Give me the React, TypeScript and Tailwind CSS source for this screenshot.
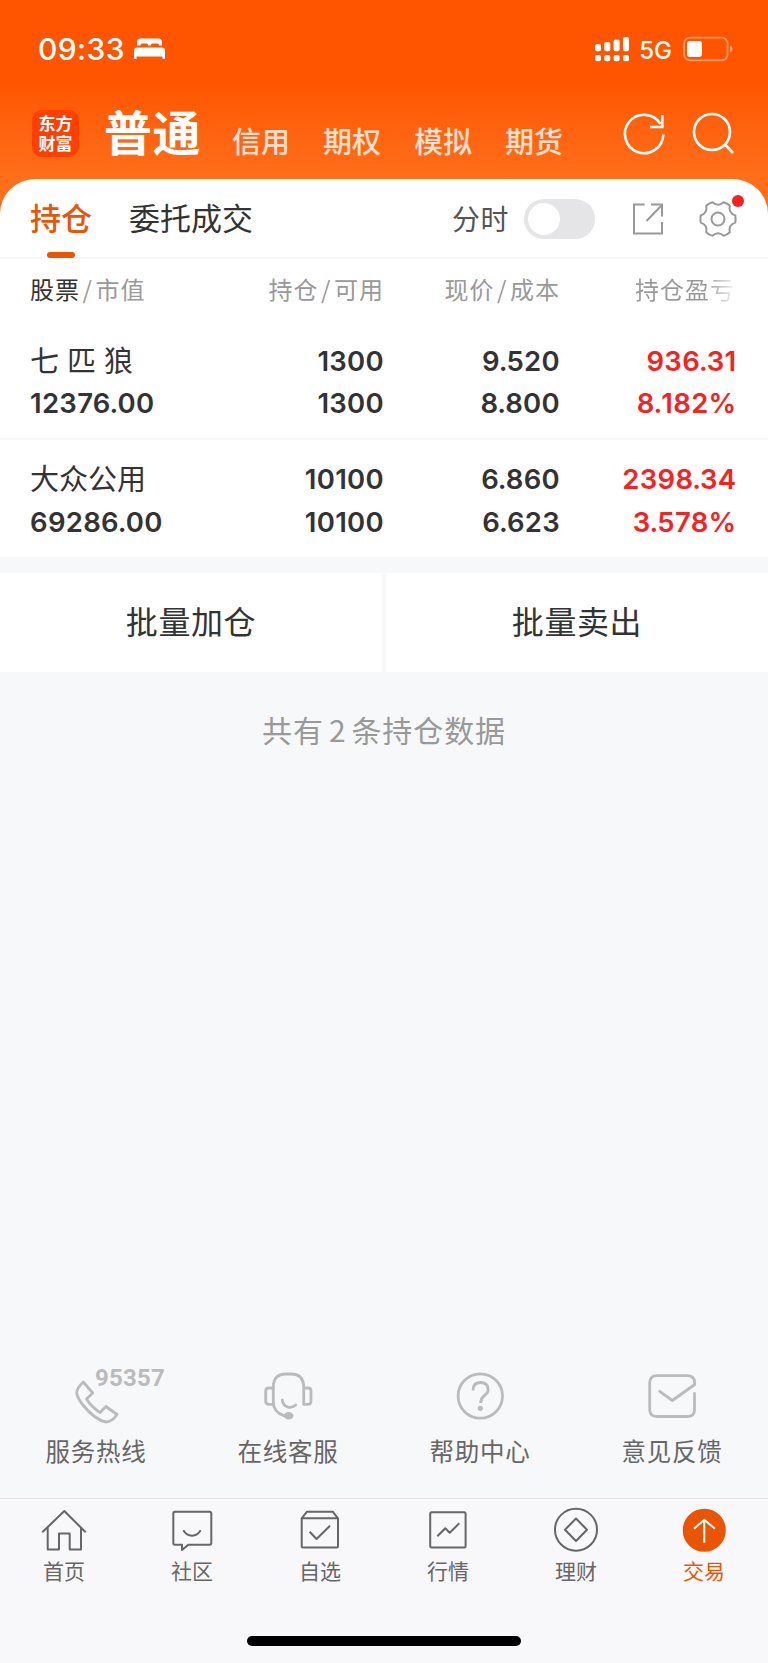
import React from "react";

interface Holding {
  name: string;
  marketValue: string;
  amount: string;
  available: string;
  price: string;
  cost: string;
  profit: string;
  profitRate: string;
}

const holdings: Holding[] = [
  {
    name: "七 匹 狼",
    marketValue: "12376.00",
    amount: "1300",
    available: "1300",
    price: "9.520",
    cost: "8.800",
    profit: "936.31",
    profitRate: "8.182%",
  },
  {
    name: "大众公用",
    marketValue: "69286.00",
    amount: "10100",
    available: "10100",
    price: "6.860",
    cost: "6.623",
    profit: "2398.34",
    profitRate: "3.578%",
  },
];

const accounts = ["信用", "期权", "模拟", "期货"];

function StatusBar() {
  return (
    <div className="flex h-[98px] items-center pr-[35px] pl-[38px] text-white">
      <span className="font-[Inter] text-[30px] leading-none font-medium tracking-[0.4px]">
        09:33
      </span>
      <svg className="ml-[9px]" width="32" height="22" viewBox="0 0 32 22" fill="currentColor">
        <path d="M3 7.5V4Q3 0.5 6.5 0.5H24.5Q28 0.5 28 4V7.5H25V7Q25 5.5 23.5 5.5H18.5Q17 5.5 17 7V7.5H14V7Q14 5.5 12.5 5.5H8Q6.5 5.5 6.5 7V7.5Z" />
        <path d="M0 21V12.5Q0 9.5 3 9.5H28Q31 9.5 31 12.5V21H28.5V18.5H2.5V21Z" />
      </svg>

      <div className="ml-auto flex items-center">
        <svg width="35" height="26" viewBox="0 0 35 26" fill="currentColor">
          <rect x="0" y="8" width="6" height="7.3" rx="2" />
          <rect x="9.3" y="6" width="6" height="9.3" rx="2" />
          <rect x="18.6" y="3.5" width="6" height="11.8" rx="2" />
          <rect x="28" y="1" width="6" height="14.3" rx="2" />
          <rect x="0" y="19" width="6" height="6.3" rx="2" />
          <rect x="9.3" y="19" width="6" height="6.3" rx="2" />
          <rect x="18.6" y="19" width="6" height="6.3" rx="2" />
          <rect x="28" y="19" width="6" height="6.3" rx="2" />
        </svg>
        <span className="mt-[3px] ml-[9px] font-[Inter] text-[24px] leading-none font-[450]">5G</span>
        <svg className="ml-[11px]" width="50" height="26" viewBox="0 0 50 26">
          <rect
            x="1"
            y="1.7"
            width="43.5"
            height="22.6"
            rx="6"
            fill="none"
            stroke="#fff"
            strokeOpacity="0.4"
            strokeWidth="1.8"
          />
          <rect x="4" y="5" width="15" height="16" rx="3" fill="#fff" />
          <path d="M47 9.5Q49.5 10.5 49.5 13T47 16.5Z" fill="#fff" fillOpacity="0.45" />
        </svg>
      </div>
    </div>
  );
}

function AccountBar() {
  return (
    <div className="flex h-[82px] pr-8 pl-8 text-white">
      <div className="mt-3 flex h-[47px] w-[47px] flex-col items-center justify-center rounded-[10px] bg-[#ff4000] pb-px text-[17px] leading-[20px] font-bold">
        <span>东方</span>
        <span>财富</span>
      </div>
      <span className="mt-[7px] ml-[25px] text-[48px] leading-[50px] font-bold tracking-[0.5px]">
        普通
      </span>
      <div className="mt-[23px] ml-[31px] flex gap-[33px] text-[29px] leading-[38px] font-medium text-white/80">
        {accounts.map((account) => (
          <span key={account}>{account}</span>
        ))}
      </div>
      <div className="mt-3 ml-auto flex gap-5">
        <svg width="48" height="48" viewBox="0 0 48 48" fill="none" stroke="currentColor" strokeWidth="2.6">
          <path d="M43.3 24.5A19.2 19.2 0 1 1 40.5 14" />
          <path d="M42.3 5V17H30" />
        </svg>
        <svg width="48" height="48" viewBox="0 0 48 48" fill="none" stroke="currentColor" strokeWidth="2.6">
          <circle cx="24" cy="22" r="18" />
          <path d="M36.5 34L45 43" />
        </svg>
      </div>
    </div>
  );
}

function Tabs() {
  return (
    <div className="flex h-[79px] items-center border-b-2 border-[#f7f7f8] pl-[30px]">
      <div className="relative -mt-[3px] text-[31px] leading-[44px] font-medium text-[#ea5504]">
        持仓
        <div className="absolute -bottom-[19px] left-[17px] h-[6px] w-7 rounded-[3px] bg-[#ea5504]"></div>
      </div>
      <div className="-mt-[3px] ml-[37px] text-[31px] leading-[44px] text-[#333]">委托成交</div>

      <div className="mr-[30px] ml-auto flex items-center">
        <span className="-mt-[2px] text-[28px] leading-[44px] tracking-[0.5px] text-[#555]">分时</span>
        <div className="ml-[15px] flex h-10 w-[71px] items-center rounded-full bg-[#e5e5e7] pl-1">
          <div className="h-8 w-8 rounded-full bg-white"></div>
        </div>
        <svg
          className="ml-[37px]"
          width="32"
          height="32"
          viewBox="0 0 32 32"
          fill="none"
          stroke="#999"
          strokeWidth="2"
        >
          <path d="M12.7 1.5H2V30.5H30V19" />
          <path d="M19 1.5H30V13.5" />
          <path d="M14.5 18L30 2" />
        </svg>
        <div className="relative ml-[34px]">
          <svg
            width="40"
            height="40"
            viewBox="-20 -20 40 40"
            fill="none"
            stroke="#999"
            strokeWidth="2"
            strokeLinejoin="round"
          >
            <path d="M17.3 3.6Q10.2 5.9 11.8 13.2Q9 15.8 5.5 16.8Q0 11.8 -5.5 16.8Q-9 15.8 -11.8 13.2Q-10.2 5.9 -17.3 3.6Q-17.9 0 -17.3 -3.6Q-10.2 -5.9 -11.8 -13.2Q-9 -15.8 -5.500 -16.8Q0 -11.8 5.5 -16.8Q9 -15.8 11.8 -13.2Q10.2 -5.9 17.3 -3.6Q17.9 0 17.3 3.6Z" />
            <circle r="6.5" />
          </svg>
          <div className="absolute -top-[4px] -right-[6px] h-3 w-3 rounded-full bg-[#fa2020]"></div>
        </div>
      </div>
    </div>
  );
}

function TableHeader() {
  return (
    <div className="flex h-[63px] items-center pb-[3px] pl-[30px] text-[24px] leading-9 tracking-[1px] text-[#999]">
      <div className="w-[180px]">
        <span className="text-[#333]">股票</span>
        <span className="mx-[2.5px]">/</span>市值
      </div>
      <div className="w-[174px] text-right">
        持仓<span className="mx-[2.5px]">/</span>可用
      </div>
      <div className="w-[176px] text-right">
        现价<span className="mx-[2.5px]">/</span>成本
      </div>
      <div className="ml-[75px] w-[100px] overflow-hidden bg-linear-to-r from-[#999] from-70% to-[#999]/10 bg-clip-text whitespace-nowrap text-transparent">
        持仓盈亏
      </div>
    </div>
  );
}

// Tightens the space around the decimal point
function Figure({ value }: { value: string }) {
  const [whole, fraction] = value.split(".");

  return (
    <div>
      {whole}
      {fraction && <span className="-mx-[1.2px]">.</span>}
      {fraction}
    </div>
  );
}

function HoldingRow({ holding }: { holding: Holding }) {
  return (
    <div className="flex h-full items-center pt-1 pl-[30px] font-[Inter,'Noto_Sans_CJK_SC',sans-serif] text-[27.5px] leading-[42.5px] font-semibold tracking-[0.3px] text-[#333]">
      <div className="w-[180px]">
        <div className="-mt-[2px] mb-[2px] font-['Noto_Sans_CJK_SC',sans-serif] text-[29px] font-normal tracking-normal [word-spacing:1.5px]">
          {holding.name}
        </div>
        <Figure value={holding.marketValue} />
      </div>
      <div className="w-[174px] text-right">
        <Figure value={holding.amount} />
        <Figure value={holding.available} />
      </div>
      <div className="w-[176px] text-right">
        <Figure value={holding.price} />
        <Figure value={holding.cost} />
      </div>
      <div className="w-[176.5px] text-right text-[#fa2020]">
        <Figure value={holding.profit} />
        <Figure value={holding.profitRate} />
      </div>
    </div>
  );
}

interface IconProps {
  children: React.ReactNode;
}

function ServiceIcon({ children }: IconProps) {
  return (
    <svg
      width="56"
      height="56"
      viewBox="0 0 56 56"
      fill="none"
      stroke="#bbb"
      strokeWidth="2.8"
      strokeLinecap="round"
      strokeLinejoin="round"
    >
      {children}
    </svg>
  );
}

const services = [
  {
    label: "服务热线",
    badge: "95357",
    icon: (
      <path d="M15.3 14L24.7 25L18.5 31Q23.5 39 32 44.5L38 38.5L49 46.5Q44 54 38 54Q27 52 14.5 36.5Q8.5 28.5 8.7 24Q10 18.5 15.3 14Z" />
    ),
  },
  {
    label: "在线客服",
    icon: (
      <>
        <path d="M24 47.7Q13.3 44 13.3 34V19.5Q13.3 6 26 6H31Q43.7 6 43.7 19.5V36.3H48Q51 36.3 51 33.3V23Q51 20 48 20H43.7" />
        <path d="M13.3 20H9Q5.7 20 5.7 23V33.3Q5.7 36.3 9 36.3H13.3" />
        <path d="M22.3 32Q23 37.5 28 39.2Q32.5 40 35.7 37" />
        <ellipse cx="28.7" cy="47.7" rx="3.5" ry="2.3" fill="#bbb" />
      </>
    ),
  },
  {
    label: "帮助中心",
    icon: (
      <>
        <circle cx="28.3" cy="28" r="22.2" />
        <path d="M21 22.5Q21 14.5 28.5 14.5T36.2 22Q36 25 32.5 27.5T28.5 35" strokeLinecap="butt" />
        <circle cx="28.3" cy="40.3" r="1.2" fill="#bbb" />
      </>
    ),
  },
  {
    label: "意见反馈",
    icon: (
      <path d="M15.7 23.3L28.3 32.5L50.7 16.5V14.5Q50 7.7 43.5 7.7H13Q5.7 7.7 5.7 15V41.5Q5.7 48.5 13 48.5H43.5Q50.5 48.5 50.5 41.5V25.5" />
    ),
  },
];

const navItems = [
  {
    label: "首页",
    icon: (
      <>
        <path d="M2.3 26.3L24.3 5L45.7 26.3" />
        <path d="M7.7 21.5V43.5H19V27.5H29.7V43.5H41V21.5" />
      </>
    ),
  },
  {
    label: "社区",
    icon: (
      <>
        <path d="M7 5.7H41.5Q43.3 5.7 43.3 7.5V37Q43.3 38.7 41.5 38.7H20.3L14 44V38.7H7Q5.3 38.7 5.3 37V7.5Q5.3 5.7 7 5.7Z" />
        <path d="M15.3 24.3Q18.5 29.7 24 29.7T32.7 24.3" />
      </>
    ),
  },
  {
    label: "自选",
    icon: (
      <>
        <path d="M5.7 12.3L11 5.7H36.7L42 12.3V40Q42 41.5 40.5 41.5H7.2Q5.7 41.5 5.7 40Z" />
        <path d="M5.7 12.3H42" />
        <path d="M13.7 25.7L20.5 33L34 19.7" />
      </>
    ),
  },
  {
    label: "行情",
    icon: (
      <>
        <rect x="6.2" y="6.2" width="35.4" height="35.4" rx="1.5" />
        <path d="M13.3 30.3L21.3 22.2L25.7 26.7L35.3 17.3" />
      </>
    ),
  },
  {
    label: "理财",
    icon: (
      <>
        <circle cx="24" cy="23.7" r="21" />
        <path d="M24 12.5L35 23.7L24 35L13 23.7Z" />
      </>
    ),
  },
  {
    label: "交易",
    active: true,
    icon: (
      <>
        <circle cx="24.3" cy="24.3" r="20.5" fill="#ea5504" />
        <path d="M24.3 36.7V13.5M14 22.8L24.3 13.8L35 22.8" stroke="#fff" />
      </>
    ),
  },
];

export default function App() {
  return (
    <div className="flex h-[1663px] w-[768px] flex-col bg-[#f7f8fa] font-['Noto_Sans_CJK_SC',sans-serif]">
      <div className="bg-linear-to-b from-[#ff5500] from-25% to-[#ff6e19] to-55%">
        <StatusBar />
        <AccountBar />
        <div className="-mt-px rounded-t-[35px] bg-white pt-px">
          <Tabs />
          <TableHeader />
        </div>
      </div>

      <div className="h-[118px] border-b-2 border-[#f7f7f8] bg-white">
        <HoldingRow holding={holdings[0]} />
      </div>
      <div className="h-[117px] bg-white">
        <HoldingRow holding={holdings[1]} />
      </div>

      <div className="mt-4 flex h-[99px] gap-1 text-[32px] leading-[95px] tracking-[0.6px] text-[#333]">
        <button className="flex-1 bg-white pb-[4px]">批量加仓</button>
        <button className="flex-1 bg-white pb-[4px]">批量卖出</button>
      </div>
      <p className="mt-[35px] text-center text-[30px] leading-[44px] tracking-[0.9px] text-[#999]">
        共有<span className="mx-[5px]">2</span>条持仓数据
      </p>

      <div className="mt-auto grid h-[130px] grid-cols-4">
        {services.map(({ label, badge, icon }) => (
          <div key={label} className="relative flex flex-col items-center">
            <ServiceIcon>{icon}</ServiceIcon>
            {badge && (
              <span className="absolute -top-px left-[95px] font-[Roboto] text-[24px] leading-[22px] font-bold tracking-[0.2px] text-[#bbb]">
                {badge}
              </span>
            )}
            <span className="mt-[9px] text-[24.5px] leading-9 tracking-[0.7px] text-[#666]">{label}</span>
          </div>
        ))}
      </div>

      <nav className="h-[165px] border-t border-[#e2e2e4] bg-[#f8f8fa]">
        <div className="mt-[7px] grid grid-cols-6">
          {navItems.map(({ label, active, icon }) => (
            <div
              key={label}
              className={`flex flex-col items-center ${active ? "text-[#ea5504]" : "text-[#666]"}`}
            >
              <svg
                width="48"
                height="48"
                viewBox="0 0 48 48"
                fill="none"
                stroke="currentColor"
                strokeWidth="2"
                strokeLinejoin="round"
              >
                {icon}
              </svg>
              <span className="text-[21px] leading-[32px]">{label}</span>
            </div>
          ))}
        </div>
        <div className="mx-auto mt-[50px] h-[10px] w-[274px] rounded-full bg-black"></div>
      </nav>
    </div>
  );
}
